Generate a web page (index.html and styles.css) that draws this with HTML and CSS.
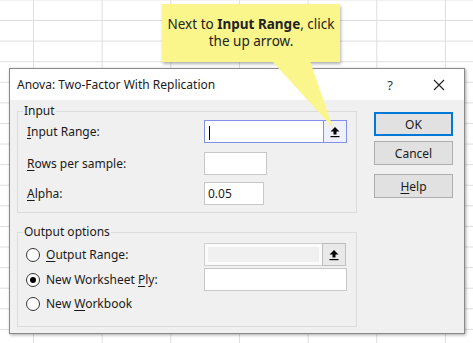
FILE: index.html
```html
<!DOCTYPE html>
<html lang="en">
<head>
  <meta charset="UTF-8">
  <title>Anova: Two-Factor With Replication</title>
  <link rel="stylesheet" href="styles.css">
</head>
<body>

  <!-- DIALOG -->
  <div class="dialog">
    <div class="titlebar">
      <span class="title">Anova: Two-Factor With Replication</span>
      <span class="help-mark">?</span>
      <svg class="close" width="12" height="12" viewBox="0 0 12 12">
        <path d="M1 1 L11 11 M11 1 L1 11" stroke="#222" stroke-width="1.1" fill="none"/>
      </svg>
    </div>

    <div class="body">
      <div class="groups">
        <fieldset class="group group-input">
          <legend>Input</legend>
          <div class="row r1">
            <label><u>I</u>nput Range:</label>
            <div class="ref-field">
              <div class="field focused"><span class="caret"></span></div>
              <div class="ref-btn focused">
                <svg width="10" height="12" viewBox="0 0 10 12"><path d="M5 1 L9.5 5.5 L6.5 5.5 L6.5 8.5 L3.5 8.5 L3.5 5.5 L0.5 5.5 Z" fill="#000"/><rect x="0.5" y="10" width="9" height="1.2" fill="#000"/></svg>
              </div>
            </div>
          </div>
          <div class="row r2">
            <label><u>R</u>ows per sample:</label>
            <div class="field w63"></div>
          </div>
          <div class="row r3">
            <label><u>A</u>lpha:</label>
            <div class="field w60">0.05</div>
          </div>
        </fieldset>

        <fieldset class="group group-output">
          <legend>Output options</legend>
          <div class="row o1">
            <label class="radio"><span class="dot"></span><span><u>O</u>utput Range:</span></label>
            <div class="ref-field">
              <div class="field disabled"></div>
              <div class="ref-btn">
                <svg width="10" height="12" viewBox="0 0 10 12"><path d="M5 1 L9.5 5.5 L6.5 5.5 L6.5 8.5 L3.5 8.5 L3.5 5.5 L0.5 5.5 Z" fill="#000"/><rect x="0.5" y="10" width="9" height="1.2" fill="#000"/></svg>
              </div>
            </div>
          </div>
          <div class="row o2">
            <label class="radio"><span class="dot checked"></span><span>New Worksheet <u>P</u>ly:</span></label>
            <div class="field w143"></div>
          </div>
          <div class="row o3">
            <label class="radio"><span class="dot"></span><span>New <u>W</u>orkbook</span></label>
          </div>
        </fieldset>
      </div>

      <div class="buttons">
        <button class="btn default">OK</button>
        <button class="btn cancel">Cancel</button>
        <button class="btn helpbtn"><u>H</u>elp</button>
      </div>
    </div>
  </div>

  <!-- CALLOUT -->
  <div class="callout">Next to <b>Input Range</b>, click<br>the up arrow.</div>
  <svg class="callout-tail" width="80" height="80" viewBox="0 0 80 80">
    <polygon points="2,0 40,0 63,67" fill="#fbf68c"/>
  </svg>

</body>
</html>
```

FILE: styles.css
```css
/* BASE */
* { box-sizing: border-box; }
body {
  margin: 0;
  width: 473px;
  height: 343px;
  overflow: hidden;
  position: relative;
  padding: 68px 0 0 9px;
  font-family: "Noto Sans", sans-serif;
  font-size: 12px;
  color: #1a1a1a;
  background-color: #fff;
  background-image:
    linear-gradient(to right, #dedede 1px, transparent 1px),
    linear-gradient(to bottom, #dedede 1px, transparent 1px);
  background-size: 68.67px 20.6px;
  background-position: 33px 20px;
}
u { text-decoration-thickness: 1px; text-underline-offset: 2px; }

/* DIALOG */
.dialog {
  width: 456px;
  height: 266px;
  border: 1px solid #8a8a8a;
  background: #f0f0f0;
  box-shadow: 1px 1px 3px rgba(0,0,0,0.35);
}
.titlebar {
  height: 31px;
  background: #fff;
  display: flex;
  align-items: center;
  padding-left: 7px;
}
.title { flex: 1; font-size: 12px; }
.help-mark { font-size: 13px; color: #333; margin-right: 40px; }
.close { margin-right: 19px; }

.body {
  display: flex;
  padding: 3px 11px 0 7px;
}
.groups { width: 340px; }

/* GROUPS */
.group {
  margin: 0;
  padding: 0 0 7px 0;
  border: 1px solid #dcdcdc;
}
.group legend {
  margin-left: 5px;
  padding: 0 1px;
  line-height: 16px;
}
.group-output { margin-top: 11px; padding-bottom: 11px; }

.row {
  display: grid;
  grid-template-columns: 186px auto;
  align-items: center;
  height: 23px;
}
.row label { padding-left: 9px; }
.r1 { margin-top: 1px; }
.r2 { margin-top: 9px; }
.r3 { margin-top: 7px; }
.o1 { margin-top: 3px; }
.o2 { margin-top: 2px; }
.o3 { margin-top: 1px; }

/* FIELDS */
.field {
  height: 23px;
  background: #fff;
  border: 1px solid #c8c8c8;
  padding: 0 3px;
  line-height: 21px;
}
.w60 { width: 60px; }
.w63 { width: 63px; }
.w143 { width: 143px; }
.ref-field { display: flex; }
.ref-field .field { width: 120px; }
.field.focused { border-color: #8290e8; }
.field.disabled {
  width: 119px;
  background: #f0f0f0;
  border-color: #cfcfcf;
  box-shadow: inset 0 0 0 3px #fbfbfb;
}
.caret {
  display: inline-block;
  width: 1px;
  height: 14px;
  background: #000;
  vertical-align: middle;
  margin-left: 1px;
}
.ref-btn {
  width: 24px;
  height: 23px;
  border: 1px solid #bdbdbd;
  background: #e9e9e9;
  display: flex;
  align-items: center;
  justify-content: center;
  margin-left: -1px;
}
.ref-btn.focused { border-color: #8290e8; background: #eef0fb; }

/* RADIOS */
.radio {
  display: flex;
  align-items: center;
  gap: 6px;
}
.row .radio { padding-left: 8px; }
.dot {
  width: 14px;
  height: 14px;
  border: 1px solid #333;
  border-radius: 50%;
  background: #fff;
  position: relative;
}
.dot.checked::after {
  content: "";
  position: absolute;
  left: 3px; top: 3px;
  width: 6px; height: 6px;
  border-radius: 50%;
  background: #000;
}

/* BUTTONS */
.buttons {
  margin-left: 17px;
  padding-top: 9px;
  display: flex;
  flex-direction: column;
  width: 79px;
}
.btn {
  height: 24px;
  font: inherit;
  color: #1a1a1a;
  background: #e1e1e1;
  border: 1px solid #adadad;
  padding: 0;
}
.btn.default { border: 2px solid #0078d7; }
.cancel { margin-top: 5px; }
.helpbtn { margin-top: 9px; }

/* CALLOUT */
.callout {
  position: absolute;
  left: 162px;
  top: 4px;
  width: 178px;
  height: 58px;
  background: #fbf68c;
  box-shadow: 1px 2px 3px rgba(0,0,0,0.3);
  text-align: center;
  font-size: 13.5px;
  line-height: 17px;
  padding-top: 12px;
  color: #222;
}
.callout-tail {
  position: absolute;
  left: 270px;
  top: 61px;
}
```
